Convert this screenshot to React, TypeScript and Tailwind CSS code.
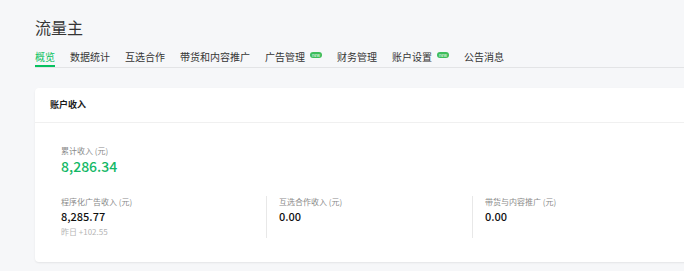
import React from "react";

const tabs = [
  { label: "概览", active: true },
  { label: "数据统计" },
  { label: "互选合作" },
  { label: "带货和内容推广" },
  { label: "广告管理", badge: true },
  { label: "财务管理" },
  { label: "账户设置", badge: true },
  { label: "公告消息" },
];

function Badge() {
  return (
    <span className="ml-[5px] mb-[6px] inline-flex h-[6px] w-[12px] items-center justify-center rounded-full bg-[#3dbd5b] text-[4px] leading-none text-white">
      new
    </span>
  );
}

const cjk = { fontFamily: '"Noto Sans CJK SC", sans-serif' };

export default function App() {
  return (
    <div className="min-h-[271px] w-[684px] overflow-hidden bg-[#f6f7f9]" style={cjk}>
      <div className="pl-[35px] pt-[15px]">
        <div className="h-[24px] text-[16px] leading-[24px] text-[#353535]">流量主</div>
        <nav className="mt-[10px] flex gap-[15px] border-b border-[#e3e4e6]">
          {tabs.map((t) => (
            <div key={t.label} className="flex items-center">
              <span
                className={
                  t.active
                    ? "border-b-2 border-[#07c160] text-[10px] leading-[16px] text-[#07c160]"
                    : "border-b-2 border-transparent text-[10px] leading-[16px] text-[#353535]"
                }
              >
                {t.label}
              </span>
              {t.badge && <Badge />}
            </div>
          ))}
        </nav>
        <div className="mt-[20px] w-[900px] rounded-[4px] bg-white shadow-[0_1px_2px_rgba(0,0,0,0.08)]">
          <div className="flex h-[35px] items-center border-b border-[#f0f0f0] pl-[15px] text-[9px] font-bold text-[#1a1a1a]">
            账户收入
          </div>
          <div className="pl-[26px] pt-[22px] pb-[24px]">
            <div className="text-[8px] leading-[12px] text-[#8a8a8a]">累计收入 (元)</div>
            <div className="text-[14px] font-medium leading-[18px] text-[#13b866]">8,286.34</div>
            <div className="mt-[21px] flex">
              <div className="w-[205px]">
                <div className="text-[8px] leading-[12px] text-[#8a8a8a]">程序化广告收入 (元)</div>
                <div className="mt-[1px] text-[11px] font-medium leading-[14px] text-[#111]">8,285.77</div>
                <div className="mt-[3px] text-[8px] leading-[12px] text-[#b5b5b5]">昨日 +102.55</div>
              </div>
              <div className="w-[206px] border-l border-[#e8e8e8] pl-[12px]">
                <div className="text-[8px] leading-[12px] text-[#8a8a8a]">互选合作收入 (元)</div>
                <div className="mt-[1px] text-[11px] font-medium leading-[14px] text-[#111]">0.00</div>
              </div>
              <div className="w-[206px] border-l border-[#e8e8e8] pl-[12px]">
                <div className="text-[8px] leading-[12px] text-[#8a8a8a]">带货与内容推广 (元)</div>
                <div className="mt-[1px] text-[11px] font-medium leading-[14px] text-[#111]">0.00</div>
              </div>
            </div>
          </div>
        </div>
      </div>
    </div>
  );
}
